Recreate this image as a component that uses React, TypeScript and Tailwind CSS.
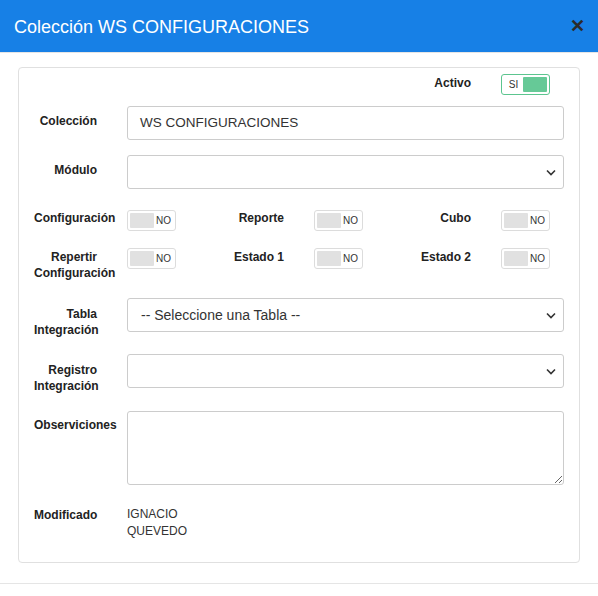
import React from "react";

const Toggle = ({ on = false }: { on?: boolean }) =>
  on ? (
    <div className="flex h-[21px] w-[49px] items-stretch rounded-[3px] border border-[#5cc58f] p-[2px]">
      <span className="flex flex-1 items-center justify-center text-[10px] text-[#333]">SI</span>
      <span className="w-[24px] rounded-[1px] bg-[#66c997]" />
    </div>
  ) : (
    <div className="flex h-[21px] w-[49px] items-stretch rounded-[3px] border border-[#dcdcdc] p-[2px]">
      <span className="w-[24px] rounded-[1px] bg-[#e1e1e1]" />
      <span className="flex flex-1 items-center justify-center text-[10px] text-[#333]">NO</span>
    </div>
  );

const Chevron = () => (
  <svg width="10" height="7" viewBox="0 0 10 7" className="text-[#333]">
    <path d="M1 1.5 L5 5.5 L9 1.5" fill="none" stroke="currentColor" strokeWidth="1.6" />
  </svg>
);

const Select = ({ value }: { value?: string }) => (
  <div className="flex h-[34px] w-[437px] items-center justify-between rounded-[3px] border border-[#cccccc] pl-[13px] pr-[7px] text-[14px] text-[#333]">
    <span>{value}</span>
    <Chevron />
  </div>
);

const Label = ({ children, className = "" }: { children: React.ReactNode; className?: string }) => (
  <div className={`w-[63px] shrink-0 text-right text-[12px] font-bold leading-[16px] text-[#222] ${className}`}>
    {children}
  </div>
);

const ToggleCell = ({ label, pad = "" }: { label: React.ReactNode; pad?: string }) => (
  <div className="flex w-[187px] shrink-0 items-start">
    <Label className={pad}>{label}</Label>
    <div className="ml-[30px]">
      <Toggle />
    </div>
  </div>
);

export default function App() {
  return (
    <div className="h-[596px] w-[598px] bg-white font-['Liberation_Sans',Arial,sans-serif]">
      <div className="flex h-[53px] items-center justify-between border-b border-[#e5e5e5] bg-[#1780e6] pl-[14px] pr-[13px]">
        <h1 className="pt-[2px] text-[18px] text-white">Colección WS CONFIGURACIONES</h1>
        <span className="text-[18px] font-bold leading-none text-[#2b2b2b]">✕</span>
      </div>

      <div className="px-[18px] pt-[14px]">
        <div className="h-[496px] rounded-[4px] border border-[#e0e0e0] pl-[15px]">
          <div className="mt-[6px] flex items-start pl-[374px]">
            <Label className="pt-[1px]">Activo</Label>
            <div className="ml-[30px]">
              <Toggle on />
            </div>
          </div>

          <div className="mt-[11px] flex h-[34px] items-start">
            <Label className="pt-[7px]">Colección</Label>
            <div className="ml-[30px] flex h-[34px] w-[437px] items-center rounded-[3px] border border-[#cccccc] px-[12px] text-[13.5px] text-[#333]">
              WS CONFIGURACIONES
            </div>
          </div>

          <div className="mt-[15px] flex h-[34px] items-start">
            <Label className="pt-[7px]">Módulo</Label>
            <div className="ml-[30px]">
              <Select />
            </div>
          </div>

          <div className="mt-[21px] flex h-[21px]">
            <ToggleCell label="Configuración" />
            <ToggleCell label="Reporte" />
            <ToggleCell label="Cubo" />
          </div>

          <div className="mt-[17px] flex h-[21px]">
            <ToggleCell
              pad="pt-[1px]"
              label={
                <>
                  Repertir
                  <br />
                  Configuración
                </>
              }
            />
            <ToggleCell pad="pt-[1px]" label="Estado 1" />
            <ToggleCell pad="pt-[1px]" label="Estado 2" />
          </div>

          <div className="mt-[29px] flex h-[34px] items-start">
            <Label className="pt-[8px]">
              Tabla
              <br />
              Integración
            </Label>
            <div className="ml-[30px]">
              <Select value="-- Seleccione una Tabla --" />
            </div>
          </div>

          <div className="mt-[22px] flex h-[34px] items-start">
            <Label className="pt-[8px]">
              Registro
              <br />
              Integración
            </Label>
            <div className="ml-[30px]">
              <Select />
            </div>
          </div>

          <div className="mt-[23px] flex h-[74px] items-start">
            <Label className="pt-[6px]">Observiciones</Label>
            <textarea
              readOnly
              className="ml-[30px] h-[74px] w-[437px] resize rounded-[3px] border border-[#cccccc] outline-none"
            />
          </div>

          <div className="mt-[18px] flex items-start">
            <Label className="pt-[4px]">Modificado</Label>
            <div className="ml-[30px] pt-[3px] text-[12px] leading-[17px] text-[#333]">
              IGNACIO
              <br />
              QUEVEDO
            </div>
          </div>
        </div>
      </div>

      <div className="mt-[20px] border-t border-[#e5e5e5]" />
    </div>
  );
}
